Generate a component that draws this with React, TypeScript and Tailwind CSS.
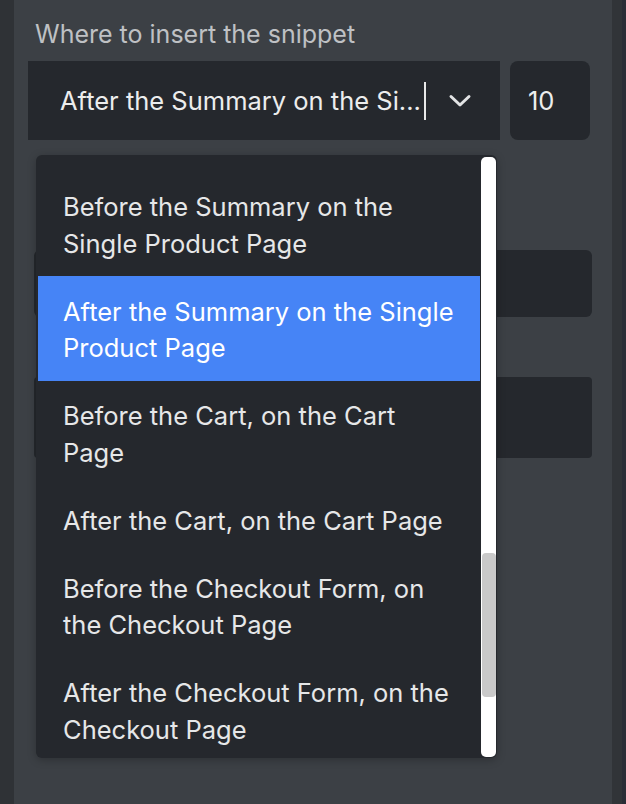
import React from 'react';

const options: string[][] = [
  ['Before the Summary on the', 'Single Product Page'],
  ['After the Summary on the Single', 'Product Page'],
  ['Before the Cart, on the Cart', 'Page'],
  ['After the Cart, on the Cart Page'],
  ['Before the Checkout Form, on', 'the Checkout Page'],
  ['After the Checkout Form, on the', 'Checkout Page'],
  ['Before the Order Review, on the', 'Checkout Page'],
];

const SELECTED = 1;

const Chevron = () => (
  <svg width="24" height="14" viewBox="0 0 24 14" fill="none">
    <path d="M3 2.5 L12 11 L21 2.5" stroke="#e2e3e4" strokeWidth="3" strokeLinecap="round" strokeLinejoin="round" />
  </svg>
);

export default function App() {
  return (
    <div className="flex w-[626px] h-[804px] overflow-hidden bg-[#2a2d36] font-['Inter',sans-serif]">
      {/* Left gutter */}
      <div className="w-[14px] bg-[#2f3236]" />

      {/* Settings panel */}
      <div className="relative flex-1 bg-[#3c4045] pl-[14px] pt-[20px]">
        <label className="block pl-[7px] text-[25px] leading-[28px] text-[#bfc1c4]">
          Where to insert the snippet
        </label>

        <div className="mt-[13px] flex gap-[10px]">
          <div className="flex h-[79px] w-[472px] items-center bg-[#25282d] pl-[32px] pr-[28px]">
            <span className="text-[25.5px] leading-[37px] text-[#eceded] whitespace-nowrap">
              After the Summary on the Si...
            </span>
            <span className="ml-[3px] h-[38px] w-[2px] bg-[#e8e8e8]" />
            <div className="ml-auto flex items-center">
              <Chevron />
            </div>
          </div>
          <div className="flex h-[79px] w-[80px] items-center rounded-lg bg-[#25282d] pl-[18px]">
            <span className="text-[25.5px] leading-[37px] text-[#eceded]">10</span>
          </div>
        </div>

        {/* Fields behind the open list */}
        <label className="mt-[62px] block pl-[7px] text-[25px] leading-[28px] text-[#bfc1c4]">
          Location priority
        </label>
        <div className="ml-[6px] mt-[20px] h-[67px] w-[558px] rounded-md bg-[#25282d]" />
        <label className="mt-[16px] block pl-[7px] text-[25px] leading-[28px] text-[#bfc1c4]">
          Conditions
        </label>
        <div className="ml-[6px] mt-[16px] h-[81px] w-[558px] rounded-sm bg-[#25282d]" />

        {/* Open dropdown list */}
        <div className="absolute left-[22px] top-[155px] h-[603px] w-[461px] overflow-hidden rounded-md bg-[#25282d] pl-[2px] shadow-[0_2px_8px_rgba(0,0,0,0.25)]">
          <ul className="w-[442px] pt-[16.5px]">
            {options.map((lines, i) => (
              <li
                key={i}
                className={
                  i === SELECTED
                    ? 'bg-[#4684f6] pt-[17.5px] pb-[14px] pl-[25px] pr-[16px] text-[25.5px] leading-[36.5px] text-white'
                    : 'pt-[17.5px] pb-[14px] pl-[25px] pr-[16px] text-[25.5px] leading-[36.5px] text-[#e6e7e8]'
                }
              >
                {lines.map((l, j) => (
                  <span key={j} className="block whitespace-nowrap">
                    {l}
                  </span>
                ))}
              </li>
            ))}
          </ul>

          {/* Scrollbar */}
          <div className="absolute right-[1px] top-[2px] bottom-[1px] w-[15px] rounded-[5px] bg-white">
            <div className="absolute left-[1px] right-0 top-[396px] h-[144px] rounded-t-[4px] rounded-b-[4px] bg-[#c9c9c9]" />
          </div>
        </div>
      </div>

      {/* Right gutter */}
      <div className="w-[10px] bg-[#313438]" />
      <div className="w-[4px] bg-[#2a2d36]" />
    </div>
  );
}
